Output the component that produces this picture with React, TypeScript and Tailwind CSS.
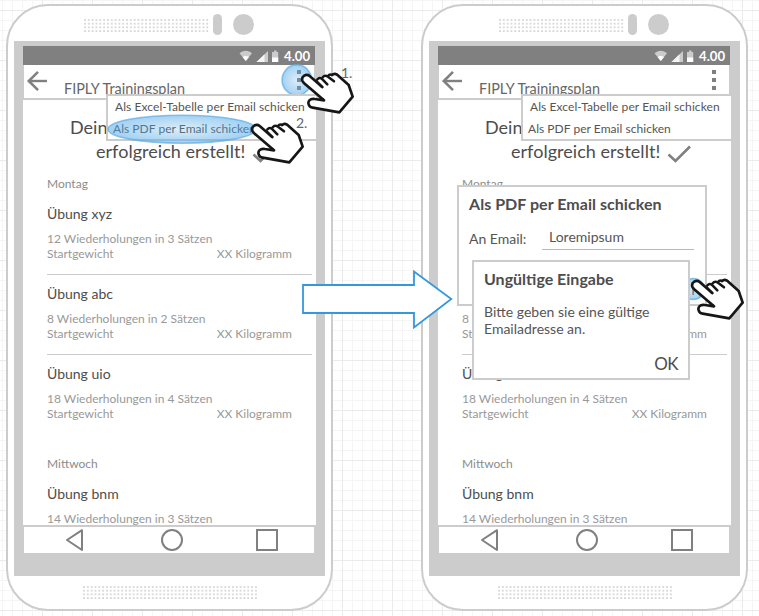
import React from "react";

type Exercise = { name: string; reps: string };

const monday: Exercise[] = [
  { name: "Übung xyz", reps: "12 Wiederholungen in 3 Sätzen" },
  { name: "Übung abc", reps: "8 Wiederholungen in 2 Sätzen" },
  { name: "Übung uio", reps: "18 Wiederholungen in 4 Sätzen" },
];

function Dots({ id, width }: { id: string; width: number }) {
  return (
    <svg width={width} height="13" aria-hidden="true">
      <defs>
        <pattern id={id} width="3.82" height="3.7" patternUnits="userSpaceOnUse">
          <rect x="0.2" y="0.2" width="1.6" height="1.6" fill="#cccccc" />
        </pattern>
      </defs>
      <rect width={width} height="13" fill={`url(#${id})`} />
    </svg>
  );
}

function StatusBar() {
  return (
    <div className="flex h-[19px] w-[292px] items-center justify-end bg-[#808080] pr-[5px]">
      <svg width="40" height="14" viewBox="0 0 40 14" className="mr-[5px]">
        <path d="M0.5 4.2C4 0.8 9.5 0.8 13 4.2L6.8 12Z" fill="#cccccc" />
        <path d="M3.6 8C5.5 6.6 8.2 6.6 10 8L6.8 12Z" fill="#ffffff" />
        <path d="M17.5 13L29 2V13Z" fill="#cccccc" />
        <path d="M17.5 13L25.5 5.3V13Z" fill="#f5f5f5" />
        <path d="M33 3H35V1.5H37.5V3H39.2V13H33Z" fill="#cccccc" />
        <path d="M33 8.5H39.2V13H33Z" fill="#ffffff" />
      </svg>
      <span className="w-[26px] text-[13.2px] leading-[18px] font-bold text-white">4.00</span>
    </div>
  );
}

function ExerciseRow({ name, reps }: Exercise) {
  return (
    <div>
      <div className="text-[14px] leading-5 text-[#4d4d4d]">{name}</div>
      <div className="mt-[7px] text-[12px] leading-[15px] text-[#999999]">{reps}</div>
      <div className="flex justify-between pr-[24px] text-[12px] leading-[15px] text-[#999999]">
        <span>Startgewicht</span>
        <span>XX Kilogramm</span>
      </div>
    </div>
  );
}

function Phone({ id, highlight }: { id: string; highlight?: boolean }) {
  return (
    <div className="h-[607px] w-[327px] shrink-0 rounded-[42px] border-2 border-[#cccccc] bg-white pl-[6px]">
      <div className="flex h-[35px] items-start">
        <div className="ml-[70px] mt-[13px] w-[125px]">
          <Dots id={`${id}-top`} width={125} />
        </div>
        <div className="ml-[4px] mt-[8px] h-[21px] w-[9px] rounded-full bg-[#cccccc]" />
        <div className="ml-[11px] mt-[8px] h-[21px] w-[21px] rounded-full bg-[#cccccc]" />
      </div>
      <div className="h-[535px] w-[311px] bg-[#cccccc] pl-[9px] pt-[5px]">
        <div className="relative h-[508px] w-[293px] overflow-hidden">
          <StatusBar />
          <div className="ml-px flex h-[33px] w-[290px] bg-white">
            <svg width="24" height="24" viewBox="0 0 24 24" className="ml-[2px] mt-[4px]" fill="none" stroke="#808080">
              <path d="M21 12H3" strokeWidth="2.4" />
              <path d="M12 2.8L2.8 12L12 21.2" strokeWidth="2.6" />
            </svg>
            <span className="ml-[14px] mt-[14px] whitespace-nowrap text-[14.4px] leading-5 text-[#666666]">
              FIPLY Trainingsplan
            </span>
            <div className="ml-auto mr-[13px] mt-[5px] flex flex-col gap-[4px]">
              <i className="h-[4px] w-[4px] bg-[#808080]" />
              <i className="h-[4px] w-[4px] bg-[#808080]" />
              <i className="h-[4px] w-[4px] bg-[#808080]" />
            </div>
          </div>
          <div className="h-[2px] bg-[#cccccc]" />
          <div className="h-[425px] overflow-hidden bg-white pl-6 pt-[15px]">
            <div className="text-[18px] leading-6 text-[#4d4d4d]">
              <div className="pl-[23px]">Dein</div>
              <div className="flex pl-[49px]">
                <span className="whitespace-nowrap tracking-[0.03px]">erfolgreich erstellt!</span>
                <svg width="24" height="20" viewBox="0 0 24 20" className="ml-[7px] mt-[5px]" fill="none" stroke="#808080" strokeWidth="2.6">
                  <path d="M1.5 10.5L8.5 17L23 2.5" />
                </svg>
              </div>
            </div>
            <div className="mt-[12px] text-[12px] leading-4 text-[#8c8c8c]">Montag</div>
            <div className="mt-[12px] flex flex-col">
              {monday.map((item, i) => (
                <React.Fragment key={item.name}>
                  {i > 0 && <div className="mb-[9px] mt-[13px] h-px w-[265px] bg-[#cccccc]" />}
                  <ExerciseRow {...item} />
                </React.Fragment>
              ))}
            </div>
            <div className="mt-[35px] text-[12px] leading-4 text-[#8c8c8c]">Mittwoch</div>
            <div className="mt-[12px]">
              <ExerciseRow name="Übung bnm" reps="14 Wiederholungen in 3 Sätzen" />
            </div>
          </div>
          <div className="h-[2px] bg-[#cccccc]" />
          <div className="ml-px flex h-[26px] w-[290px] items-center bg-white">
            <svg width="290" height="26" viewBox="0 0 290 26" fill="none" stroke="#808080" strokeWidth="2" strokeLinejoin="round">
              <path d="M43 13L58 3.2V23Z" />
              <circle cx="148" cy="13" r="10" />
              <rect x="233" y="3" width="20" height="20" strokeLinejoin="miter" />
            </svg>
          </div>
          {highlight && (
            <svg className="absolute left-[258px] top-[18px]" width="32" height="32" viewBox="0 0 32 32">
              <Glow id="spot" />
              <ellipse cx="15.8" cy="16" rx="14.7" ry="15.3" fill="url(#spot)" stroke="#5dade2" strokeOpacity="0.7" strokeWidth="1.6" />
            </svg>
          )}
          <div className="absolute left-[83px] top-[48px] h-[47px] w-[220px] border-2 border-[#cccccc] bg-white text-[12px] leading-4 text-[#555555]">
            <div className="whitespace-nowrap pl-[7px] pt-[3px] tracking-[0.08px]">Als Excel-Tabelle per Email schicken</div>
            <div className="whitespace-nowrap pl-[5px] pt-[6px] tracking-[0.04px]">Als PDF per Email schicken</div>
          </div>
        </div>
      </div>
      <div className="ml-[69px] mt-[10px]">
        <Dots id={`${id}-bottom`} width={174} />
      </div>
    </div>
  );
}

function Glow({ id }: { id: string }) {
  return (
    <defs>
      <radialGradient id={id}>
        <stop offset="0" stopColor="#5dade2" stopOpacity="0.22" />
        <stop offset="1" stopColor="#4ba6ea" stopOpacity="0.52" />
      </radialGradient>
    </defs>
  );
}

function Hand({ className }: { className: string }) {
  return (
    <svg className={className} width="56.67" height="43.33" viewBox="30 50 170 130">
      <path
        d="M80 80L59 66C49 57 33 66 37 79C39 84 42 87 46 90L102 138L75 134C60 131 53 141 56 150C58 156 61 159 68 160L148 174L188 127L176 92L145 64C139 57 131 57 126 62C118 58 111 61 108 67C99 64 93 66 88 72C83 71 79 74 80 80Z"
        fill="white"
      />
      <path
        d="M97 98L59 65C49 57 33 66 37 79C39 84 42 87 46 90L102 138L75 134C60 131 53 141 56 150C58 156 61 159 68 160L148 174L188 127L176 92L145 64C139 57 131 57 126 62"
        fill="none"
        stroke="#161616"
        strokeWidth="8"
        strokeLinejoin="round"
        strokeLinecap="round"
      />
      <path
        d="M96 98L80 81M112 90L96 74C92 69 87 70 82 75M132 81L114 67C108 63 102 64 98 69M126 62C122 60 117 61 114 65"
        fill="none"
        stroke="#161616"
        strokeWidth="7.5"
        strokeLinecap="round"
      />
    </svg>
  );
}

export default function App() {
  return (
    <div className="relative h-[616px] w-[759px] overflow-hidden bg-white bg-[linear-gradient(#ebebeb_1px,transparent_1px),linear-gradient(90deg,#ebebeb_1px,transparent_1px),linear-gradient(#f5f5f5_1px,transparent_1px),linear-gradient(90deg,#f5f5f5_1px,transparent_1px)] bg-[size:50px_50px,50px_50px,10px_10px,10px_10px] bg-[position:0_10px,42px_0,0_0,2px_0] font-['Lato',sans-serif]">
      <div className="flex gap-[88px] pl-[6px] pt-[4px]">
        <Phone id="first" highlight />
        <Phone id="second" />
      </div>

      <svg className="absolute left-[105px] top-[112px]" width="154" height="34" viewBox="0 0 154 34">
        <Glow id="item" />
        <ellipse cx="77" cy="17.2" rx="74" ry="14" fill="url(#item)" stroke="#5dade2" strokeOpacity="0.7" strokeWidth="1.6" />
      </svg>
      <span className="absolute left-[341px] top-[65px] text-[14px] leading-4 text-[#666666]">1.</span>
      <span className="absolute left-[296px] top-[115px] text-[14px] leading-4 text-[#666666]">2.</span>
      <Hand className="absolute left-[300px] top-[71.3px]" />
      <Hand className="absolute left-[250px] top-[121.3px]" />

      <div className="absolute left-[457px] top-[185px] h-[121px] w-[250px] border-2 border-[#cccccc] bg-white pl-[10px] pt-[7px]">
        <div className="whitespace-nowrap text-[16px] leading-5 font-bold tracking-[0.04px] text-[#4d4d4d]">Als PDF per Email schicken</div>
        <div className="mt-[14px] flex text-[14px] leading-5 text-[#555555]">
          <span className="w-[73px] pt-[1px]">An Email:</span>
          <span className="h-[22px] w-[152px] border-b border-[#b8b8b8] pl-[7px] leading-[18px]">Loremipsum</span>
        </div>
      </div>
      <svg className="absolute left-[680px] top-[276px]" width="26" height="26" viewBox="0 0 26 26">
        <Glow id="confirm" />
        <text x="11" y="19" fontSize="15" fill="#666666" fontFamily="Lato">K</text>
        <ellipse cx="13" cy="13" rx="11.5" ry="10.5" fill="url(#confirm)" stroke="#5dade2" strokeOpacity="0.7" strokeWidth="1.6" />
      </svg>
      <div className="absolute left-[472px] top-[260px] flex h-[120px] w-[218px] flex-col border-2 border-[#cccccc] bg-white pl-[10px] pr-[10px] pt-[7px] text-[#4d4d4d]">
        <div className="text-[16px] leading-5 font-bold">Ungültige Eingabe</div>
        <div className="mt-[14px] whitespace-nowrap text-[14px] leading-[17px] text-[#555555]">
          Bitte geben sie eine gültige
          <br />
          Emailadresse an.
        </div>
        <div className="mt-[17px] text-right text-[17px] leading-5 tracking-[-0.6px]">OK</div>
      </div>
      <Hand className="absolute left-[690px] top-[276.7px]" />

      <svg className="absolute left-[300px] top-[268px]" width="155" height="64" viewBox="300 268 155 64">
        <path d="M303 285H414V271.5L451.3 299L414 327.5V313H303Z" fill="white" stroke="#3498db" strokeWidth="1.8" />
      </svg>
    </div>
  );
}
